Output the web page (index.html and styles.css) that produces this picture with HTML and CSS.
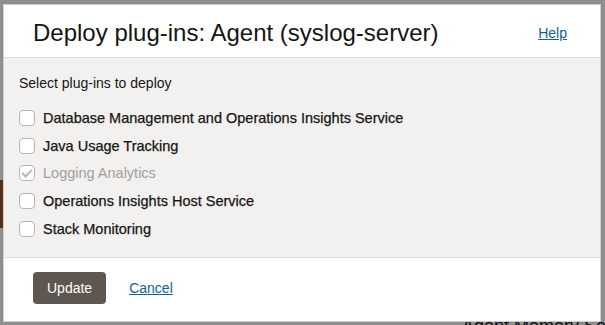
FILE: index.html
```html
<!DOCTYPE html>
<html lang="en">

<head>
    <meta charset="UTF-8">
    <title>Deploy plug-ins</title>
    <link rel="stylesheet" href="styles.css">
</head>

<body>
    <div class="page">
        <div class="page-band"></div>
        <div class="page-row">Agent Memory Se</div>
    </div>
    <div class="overlay"></div>
    <div class="dialog">
        <div class="dialog-header">
            <h1>Deploy plug-ins: Agent (syslog-server)</h1>
            <a href="#" class="link">Help</a>
        </div>
        <div class="dialog-body">
            <p class="intro">Select plug-ins to deploy</p>
            <label class="option"><input type="checkbox"><span>Database Management and Operations Insights Service</span></label>
            <label class="option"><input type="checkbox"><span>Java Usage Tracking</span></label>
            <label class="option disabled"><input type="checkbox" checked disabled><span>Logging Analytics</span></label>
            <label class="option"><input type="checkbox"><span>Operations Insights Host Service</span></label>
            <label class="option"><input type="checkbox"><span>Stack Monitoring</span></label>
        </div>
        <div class="dialog-footer">
            <button type="button">Update</button>
            <a href="#" class="link">Cancel</a>
        </div>
    </div>
</body>

</html>
```

FILE: styles.css
```css
body {
    margin: 0;
    font-family: 'Liberation Sans', Arial, sans-serif;
    color: #161513;
    background: #ffffff;
    overflow: hidden;
}

.page {
    height: 325px;
    padding-top: 180px;
    box-sizing: border-box;
    overflow: hidden;
}

.page-band {
    height: 48px;
    width: 120px;
    background: #a5551d;
}

.page-row {
    margin: 88px 0 0 462px;
    font-size: 18px;
    line-height: 20px;
    white-space: nowrap;
}

.overlay {
    position: absolute;
    inset: 0;
    background: rgba(0, 0, 0, 0.44);
}

.dialog {
    position: absolute;
    left: 3px;
    top: 4px;
    width: 598px;
    height: 318px;
    box-sizing: border-box;
    background: #fff;
    border: 1px solid #cfcfcf;
    display: flex;
    flex-direction: column;
}

.dialog-header {
    height: 52px;
    display: flex;
    align-items: center;
    justify-content: space-between;
    padding: 0 33px 0 29px;
    border-bottom: 1px solid #dedcda;
}

.dialog-header h1 {
    margin: 0;
    font-size: 24px;
    font-weight: normal;
    padding-top: 4px;
}

.dialog-header .link {
    padding-top: 4px;
}

.link {
    color: #11648a;
    font-size: 14px;
}

.dialog-body {
    background: #f2f1ef;
    height: 200px;
    box-sizing: border-box;
    padding: 17px 15px 0;
    border-bottom: 1px solid #dedcda;
}

.intro {
    margin: 0 0 12px;
    font-size: 14px;
    line-height: 17px;
}

.option {
    display: flex;
    align-items: center;
    height: 27.75px;
    font-size: 14.5px;
}

.option span {
    -webkit-text-stroke: 0.25px #161513;
}

.option input {
    appearance: none;
    width: 16px;
    height: 16px;
    margin: 0 8px 0 0;
    border: 1px solid #b8b4af;
    border-radius: 4px;
    background: #fff;
    position: relative;
}

.option input:checked::after {
    content: "";
    position: absolute;
    left: 4px;
    top: 1px;
    width: 4px;
    height: 8px;
    border: solid #b8b4af;
    border-width: 0 2px 2px 0;
    transform: rotate(45deg);
}

.option.disabled span {
    color: #a19e9a;
    -webkit-text-stroke: 0;
}

.dialog-footer {
    flex: 1;
    display: flex;
    align-items: center;
    gap: 23px;
    padding: 0 29px 3px;
}

.dialog-footer button {
    height: 32px;
    padding: 0 14px;
    border: none;
    border-radius: 4px;
    background: #5d5651;
    color: #fff;
    font-family: inherit;
    font-size: 14px;
}
```
